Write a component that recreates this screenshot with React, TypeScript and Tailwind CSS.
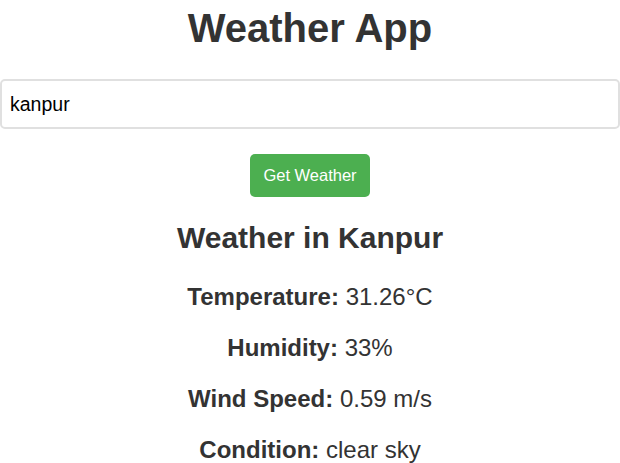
export default function App() {
  const rows = [
    { label: 'Temperature:', value: '31.26°C' },
    { label: 'Humidity:', value: '33%' },
    { label: 'Wind Speed:', value: '0.59 m/s' },
    { label: 'Condition:', value: 'clear sky' },
  ];

  return (
    <div className="min-h-screen bg-white text-[#333] text-center" style={{ fontFamily: '"Liberation Sans", Arial, sans-serif' }}>
      <h1 className="pt-[5px] text-[40px] leading-[46px] font-bold">Weather App</h1>

      {/* Search */}
      <input
        type="text"
        defaultValue="kanpur"
        className="mt-[28px] block w-full h-[50px] px-[8px] text-[19.5px] text-black border-2 border-[#e0e0e0] rounded-[5px] outline-none"
      />

      <button className="mt-[25px] w-[120px] h-[43px] bg-[#4CAF50] text-white text-[16.5px] rounded-[5px]">
        Get Weather
      </button>

      {/* Result */}
      <div className="mt-[23px]">
        <h2 className="text-[30px] leading-[36px] font-bold">Weather in Kanpur</h2>
        <div className="mt-[27px] flex flex-col gap-[23px]">
          {rows.map(({ label, value }) => (
            <p key={label} className="text-[24px] leading-[28px]">
              <span className="font-bold">{label}</span> {value}
            </p>
          ))}
        </div>
      </div>
    </div>
  );
}
